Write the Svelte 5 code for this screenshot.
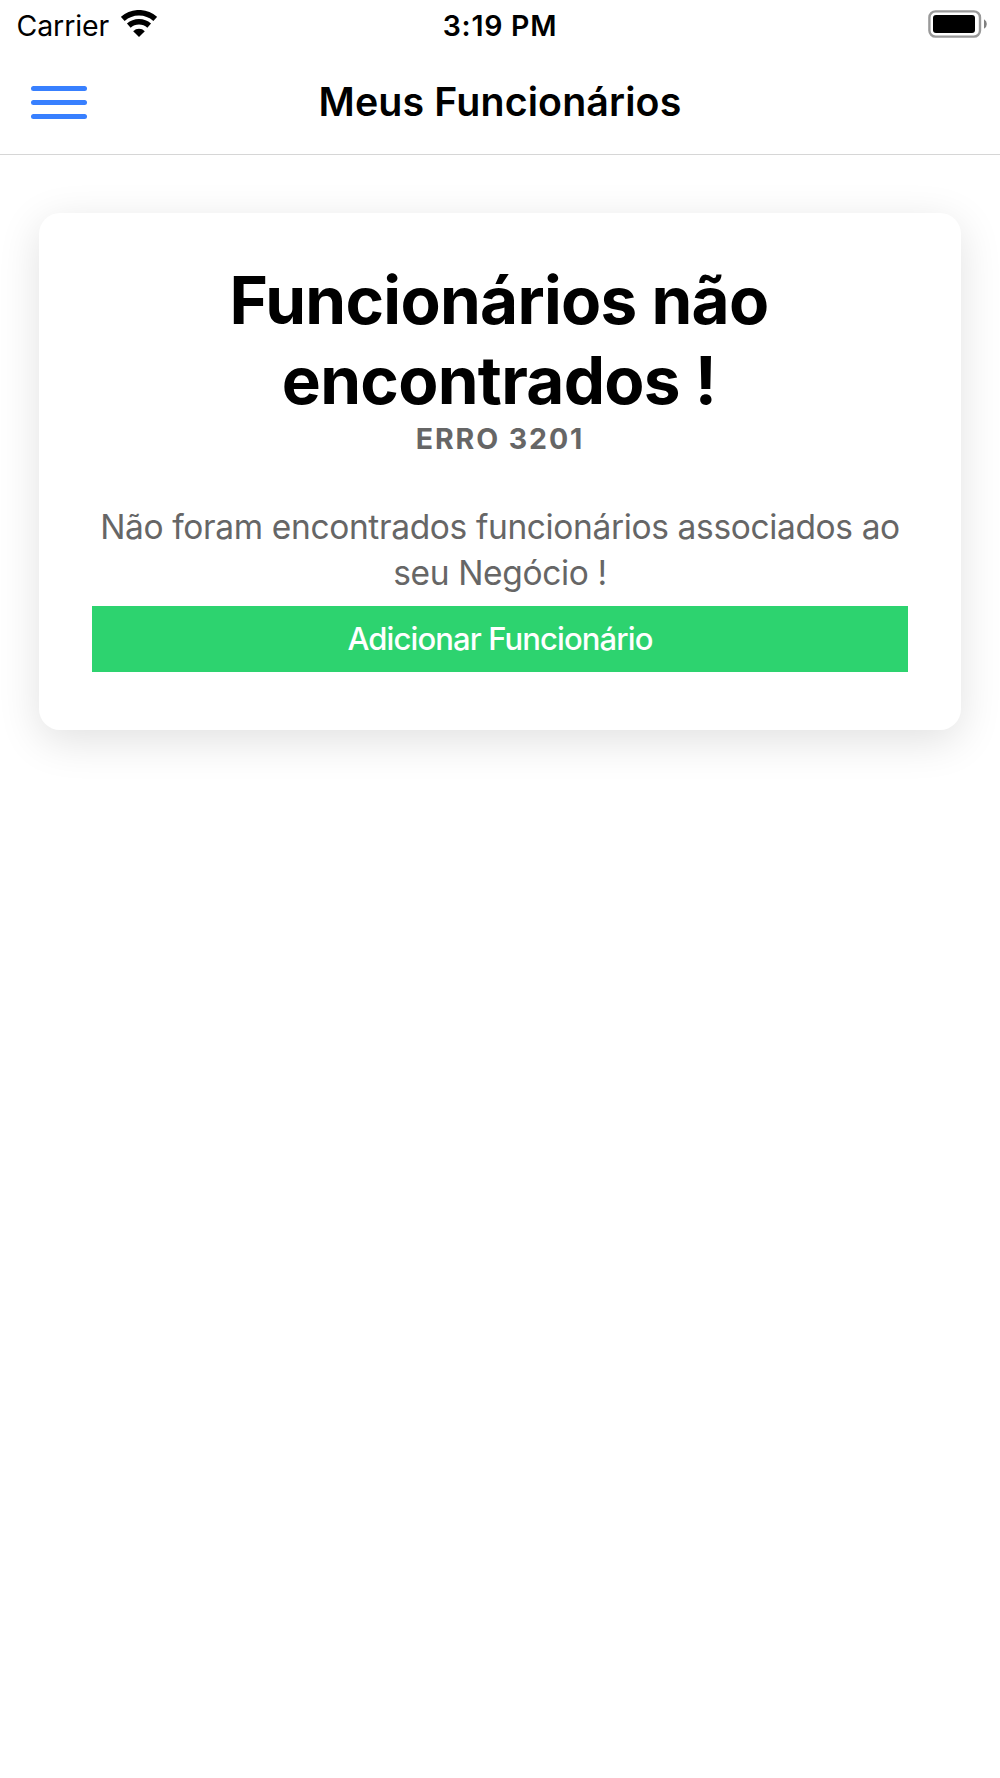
<script>
  let carrier = 'Carrier';
  let time = '3:19 PM';
  let title = 'Meus Funcionários';

  let error = {
    title: 'Funcionários não encontrados !',
    code: 'Erro 3201',
    message: 'Não foram encontrados funcionários associados ao seu Negócio !',
    action: 'Adicionar Funcionário'
  };
</script>

<div class="status_bar">
  <div class="carrier">
    <span>{carrier}</span>
    <svg class="wifi" viewBox="0 0 36 28" aria-hidden="true">
      <path d="M1.8 8.9A24.25 24.25 0 0 1 34.2 8.9" />
      <path d="M7.8 15.6A15.25 15.25 0 0 1 28.2 15.6" />
      <path class="dot" d="M18 27L12.2 21.2A8.2 8.2 0 0 1 23.8 21.2Z" />
    </svg>
  </div>
  <span class="time">{time}</span>
  <div class="battery">
    <svg viewBox="0 0 60 28" aria-hidden="true">
      <rect class="shell" x="1.4" y="1.4" width="50.6" height="25.2" rx="6.2" />
      <rect x="5" y="5" width="42" height="18" rx="3" />
      <path class="tip" d="M56 9.2Q58.8 10.8 58.8 13.9Q58.8 17 56 18.8Z" />
    </svg>
  </div>
</div>

<header>
  <button class="menu" aria-label="Menu">
    <span></span>
    <span></span>
    <span></span>
  </button>
  <h1>{title}</h1>
</header>

<main>
  <div class="card">
    <h2>{error.title}</h2>
    <h3>{error.code}</h3>
    <p>{error.message}</p>
    <button class="add">{error.action}</button>
  </div>
</main>

<style>
  :global(body) {
    margin: 0;
    background-color: #fff;
    color: #000;
    font-family: Inter, "Liberation Sans", sans-serif;
  }

  h1, h2, h3, p {
    margin: 0;
  }

  button {
    border: none;
    padding: 0;
    font-family: inherit;
  }

  .status_bar {
    display: grid;
    grid-template-columns: 1fr auto 1fr;
    align-items: center;
    height: 51px;
    padding: 0 12px;
    font-size: 28.5px;
    line-height: 50px;
  }

  .carrier {
    display: flex;
    align-items: center;
    gap: 12px;
    margin-left: 4.6px;
    letter-spacing: -0.15px;
  }

  .wifi {
    width: 36px;
    height: 28px;
    margin-bottom: 3px;
    fill: none;
    stroke: #000;
    stroke-width: 5.5;
  }

  .wifi .dot {
    fill: #000;
    stroke: none;
  }

  .time {
    font-weight: 600;
    letter-spacing: 0.75px;
  }

  .battery {
    display: flex;
    justify-content: flex-end;
  }

  .battery svg {
    width: 60px;
    height: 28px;
    margin-bottom: 3px;
  }

  .shell {
    fill: none;
    stroke: #999;
    stroke-width: 2.4;
  }

  .tip {
    fill: #808080;
  }

  header {
    display: grid;
    grid-template-columns: 1fr auto 1fr;
    align-items: center;
    height: 103px;
    padding: 0 31px;
    border-bottom: 1px solid #d6d6d6;
  }

  .menu {
    display: flex;
    flex-direction: column;
    gap: 9px;
    width: 56px;
    background: none;
  }

  .menu span {
    height: 5px;
    border-radius: 3px;
    background-color: #3880ff;
  }

  h1 {
    padding-bottom: 2px;
    font-size: 39.3px;
    font-weight: 600;
    line-height: 101px;
    letter-spacing: 0.14px;
  }

  main {
    padding: 58px 39px;
  }

  .card {
    display: flex;
    flex-direction: column;
    box-sizing: border-box;
    height: 517px;
    padding: 47px 53px;
    border-radius: 21px;
    box-shadow: 0 10.7px 42.7px rgba(0, 0, 0, 0.12);
    text-align: center;
  }

  h2 {
    margin-right: 2px;
    font-size: 65.6px;
    font-weight: 700;
    line-height: 80px;
    letter-spacing: -0.7px;
  }

  h3 {
    color: #666;
    font-size: 28.5px;
    font-weight: 700;
    line-height: 38px;
    letter-spacing: 1.9px;
    text-transform: uppercase;
  }

  p {
    margin-top: 45.6px;
    color: #666;
    font-size: 33.5px;
    line-height: 46px;
    letter-spacing: -0.36px;
  }

  .add {
    height: 66px;
    margin-top: 10.4px;
    background-color: #2dd36f;
    color: #fff;
    font-size: 31px;
    font-weight: 500;
    line-height: 66px;
    letter-spacing: -0.89px;
  }
</style>
